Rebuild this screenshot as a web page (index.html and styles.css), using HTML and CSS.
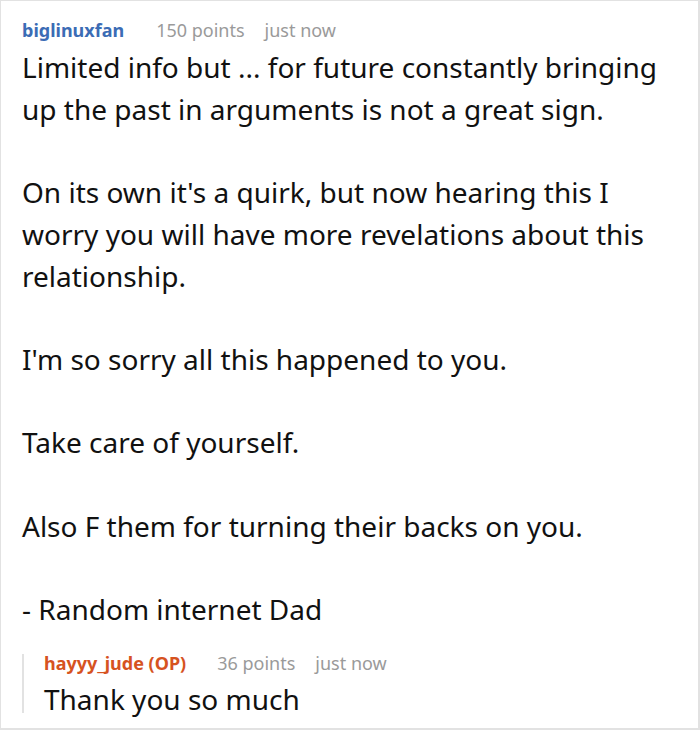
FILE: index.html
```html
<!DOCTYPE html>
<html lang="en">
<head>
<meta charset="utf-8">
<title>Comment</title>
<link rel="stylesheet" href="styles.css">
</head>
<body>
<div class="frame">
  <div class="comment">
    <div class="meta">
      <span class="author">biglinuxfan</span>
      <span class="points">150 points</span>
      <span class="time">just now</span>
    </div>
    <div class="body">
      <p>Limited info but ... for future constantly bringing up the past in arguments is not a great sign.</p>
      <p>On its own it's a quirk, but now hearing this I worry you will have more revelations about this relationship.</p>
      <p>I'm so sorry all this happened to you.</p>
      <p>Take care of yourself.</p>
      <p>Also F them for turning their backs on you.</p>
      <p>- Random internet Dad</p>
    </div>
    <div class="reply">
      <div class="meta">
        <span class="author op">hayyy_jude (OP)</span>
        <span class="points">36 points</span>
        <span class="time">just now</span>
      </div>
      <div class="body">
        <p>Thank you so much</p>
      </div>
    </div>
  </div>
</div>
</body>
</html>
```
FILE: styles.css
```css
html, body {
  margin: 0;
  padding: 0;
  background: #fff;
}
body {
  font-family: "Noto Sans", "Open Sans", sans-serif;
  color: #111;
}
.frame {
  width: 700px;
  height: 730px;
  box-sizing: border-box;
  border: 1px solid #e2e2e2;
  border-right-width: 2px;
  border-bottom-width: 2px;
  overflow: hidden;
}
.comment {
  padding: 18px 20px 0 21px;
}
.meta {
  display: flex;
  align-items: baseline;
  font-size: 18px;
  line-height: 22px;
}
.author {
  font-weight: 700;
  color: #3b6cb5;
  margin-right: 32px;
}
.author.op {
  color: #d6531f;
  margin-right: 31px;
}
.points,
.time {
  color: #9a9a9a;
}
.points {
  margin-right: 20px;
}
.body {
  margin-top: 6px;
  font-size: 28px;
  line-height: 41.7px;
}
.body p {
  margin: 0 0 41.7px;
}
.body p:last-child {
  margin-bottom: 0;
}
.reply {
  margin-top: 23px;
  padding-left: 20px;
  border-left: 2px solid #e2e2e2;
}
.reply .meta {
  line-height: 18px;
}
.reply .body {
  margin-top: 13px;
  line-height: 28px;
}
```
